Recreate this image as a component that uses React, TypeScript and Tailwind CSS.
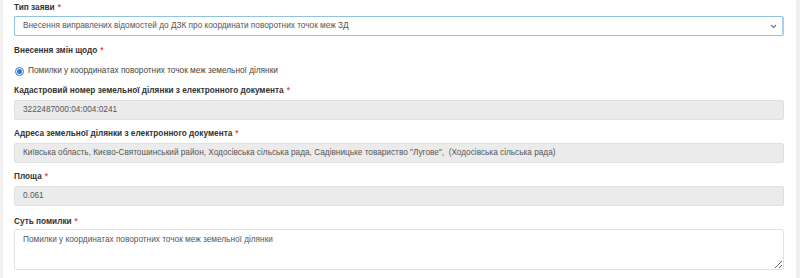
import React from "react";

const Req = () => <span className="text-[#e05555] ml-[3px]">*</span>;

const Label = ({ children, className = "" }: { children: React.ReactNode; className?: string }) => (
  <div className={`h-[12px] leading-[12px] text-[8.25px] font-bold text-[#333] ${className}`}>
    {children}
    <Req />
  </div>
);

const ReadInput = ({ value, className = "" }: { value: string; className?: string }) => (
  <div
    className={`h-[20px] flex items-center px-[8px] bg-[#ebebeb] border border-[#e0e0e0] rounded-[2px] text-[8.25px] text-[#555] whitespace-pre ${className}`}
  >
    {value}
  </div>
);

export default function App() {
  return (
    <div
      className="w-[800px] h-[278px] flex bg-white overflow-hidden"
      style={{ fontFamily: '"Liberation Sans", Arial, sans-serif' }}
    >
      <div className="w-[3px] bg-[#f1f1f1]" />
      <div className="flex-1 flex flex-col pl-[11px] pr-[12px] pt-[2px]">
        <Label>Тип заяви</Label>
        <div className="mt-[2px] h-[20px] flex items-center justify-between pl-[8px] pr-[4px] border border-[#93c2e0] border-r-2 border-r-[#a9d0ea] rounded-[2px] text-[8.25px] text-[#555]">
          <span>Внесення виправлених відомостей до ДЗК про координати поворотних точок меж ЗД</span>
          <svg width="7" height="5" viewBox="0 0 7 5" className="mr-[1px]">
            <path d="M1 1 L3.5 3.5 L6 1" stroke="#777" strokeWidth="1.2" fill="none" />
          </svg>
        </div>

        <Label className="mt-[9px]">Внесення змін щодо</Label>
        <div className="mt-[8px] h-[12px] flex items-center gap-[4px] text-[8.25px] text-[#444]">
          <span className="w-[9px] h-[9px] rounded-full border border-[#2a77d6] flex items-center justify-center ml-[1px]">
            <span className="w-[5px] h-[5px] rounded-full bg-[#2a77d6]" />
          </span>
          <span>Помилки у координатах поворотних точок меж земельної ділянки</span>
        </div>

        <Label className="mt-[8px]">Кадастровий номер земельної ділянки з електронного документа</Label>
        <ReadInput className="mt-[3px]" value="3222487000:04:004:0241" />

        <Label className="mt-[8px]">Адреса земельної ділянки з електронного документа</Label>
        <ReadInput
          className="mt-[3px]"
          value={'Київська область, Києво-Святошинський район, Ходосівська сільська рада, Садівницьке товариство "Лугове",  (Ходосівська сільська рада)'}
        />

        <Label className="mt-[8px]">Площа</Label>
        <ReadInput className="mt-[3px]" value="0.061" />

        <Label className="mt-[10px]">Суть помилки</Label>
        <textarea
          readOnly
          defaultValue="Помилки у координатах поворотних точок меж земельної ділянки"
          className="mt-[1px] h-[41px] px-[8px] py-[4px] border border-[#e2e2e2] rounded-[2px] text-[8.25px] leading-[12px] text-[#555] bg-white resize-y outline-none"
          style={{ fontFamily: '"Liberation Sans", Arial, sans-serif' }}
        />
      </div>
      <div className="w-[4px] bg-[#efefef]" />
    </div>
  );
}
